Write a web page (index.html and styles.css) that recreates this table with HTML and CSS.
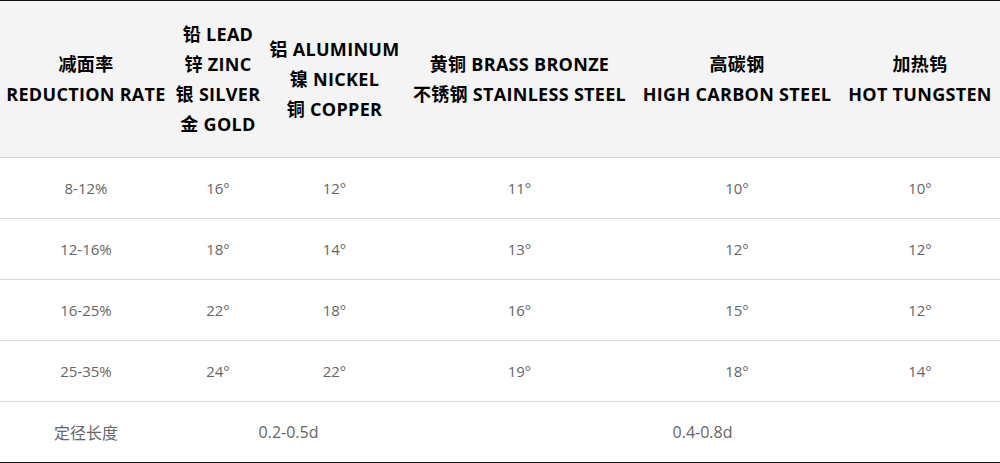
FILE: index.html
```html
<!DOCTYPE html>
<html lang="zh">
<head>
<meta charset="utf-8">
<title>Reduction angles</title>
<link rel="stylesheet" href="styles.css">
</head>
<body>
<div class="frame">
<table class="angles">
  <colgroup>
    <col class="c1"><col class="c2"><col class="c3"><col class="c4"><col class="c5"><col class="c6">
  </colgroup>
  <thead>
    <tr>
      <th>减面率<br>REDUCTION RATE</th>
      <th>铅 LEAD<br>锌 ZINC<br>银 SILVER<br>金 GOLD</th>
      <th>铝 ALUMINUM<br>镍 NICKEL<br>铜 COPPER</th>
      <th>黄铜 BRASS BRONZE<br>不锈钢 STAINLESS STEEL</th>
      <th>高碳钢<br>HIGH CARBON STEEL</th>
      <th>加热钨<br>HOT TUNGSTEN</th>
    </tr>
  </thead>
  <tbody>
    <tr><td>8-12%</td><td>16°</td><td>12°</td><td>11°</td><td>10°</td><td>10°</td></tr>
    <tr><td>12-16%</td><td>18°</td><td>14°</td><td>13°</td><td>12°</td><td>12°</td></tr>
    <tr><td>16-25%</td><td>22°</td><td>18°</td><td>16°</td><td>15°</td><td>12°</td></tr>
    <tr><td>25-35%</td><td>24°</td><td>22°</td><td>19°</td><td>18°</td><td>14°</td></tr>
    <tr class="last"><td>定径长度</td><td colspan="2">0.2-0.5d</td><td colspan="3">0.4-0.8d</td></tr>
  </tbody>
</table>
</div>
</body>
</html>
```

FILE: styles.css
```css
html, body {
  margin: 0;
  padding: 0;
  background: #fff;
}
.frame {
  width: 1000px;
  border-top: 1px solid #111;
  border-bottom: 1px solid #111;
}
.angles {
  width: 1000px;
  border-collapse: collapse;
  table-layout: fixed;
  font-family: "Open Sans", "Noto Sans CJK SC", sans-serif;
}
.c1 { width: 172px; }
.c2 { width: 92px; }
.c3 { width: 141px; }
.c4 { width: 229px; }
.c5 { width: 206px; }
.c6 { width: 160px; }
.angles th {
  background: #f4f4f4;
  height: 156px;
  padding: 0;
  font-size: 18px;
  font-weight: 700;
  letter-spacing: 0.3px;
  line-height: 30px;
  color: #000;
  text-align: center;
  vertical-align: middle;
  white-space: nowrap;
  border-bottom: 1px solid #d6d6d6;
}
.angles td {
  height: 60px;
  padding: 0;
  font-size: 15px;
  color: #666;
  text-align: center;
  vertical-align: middle;
  border-bottom: 1px solid #d6d6d6;
}
.angles tr.last td {
  border-bottom: none;
  font-size: 16px;
}
```
